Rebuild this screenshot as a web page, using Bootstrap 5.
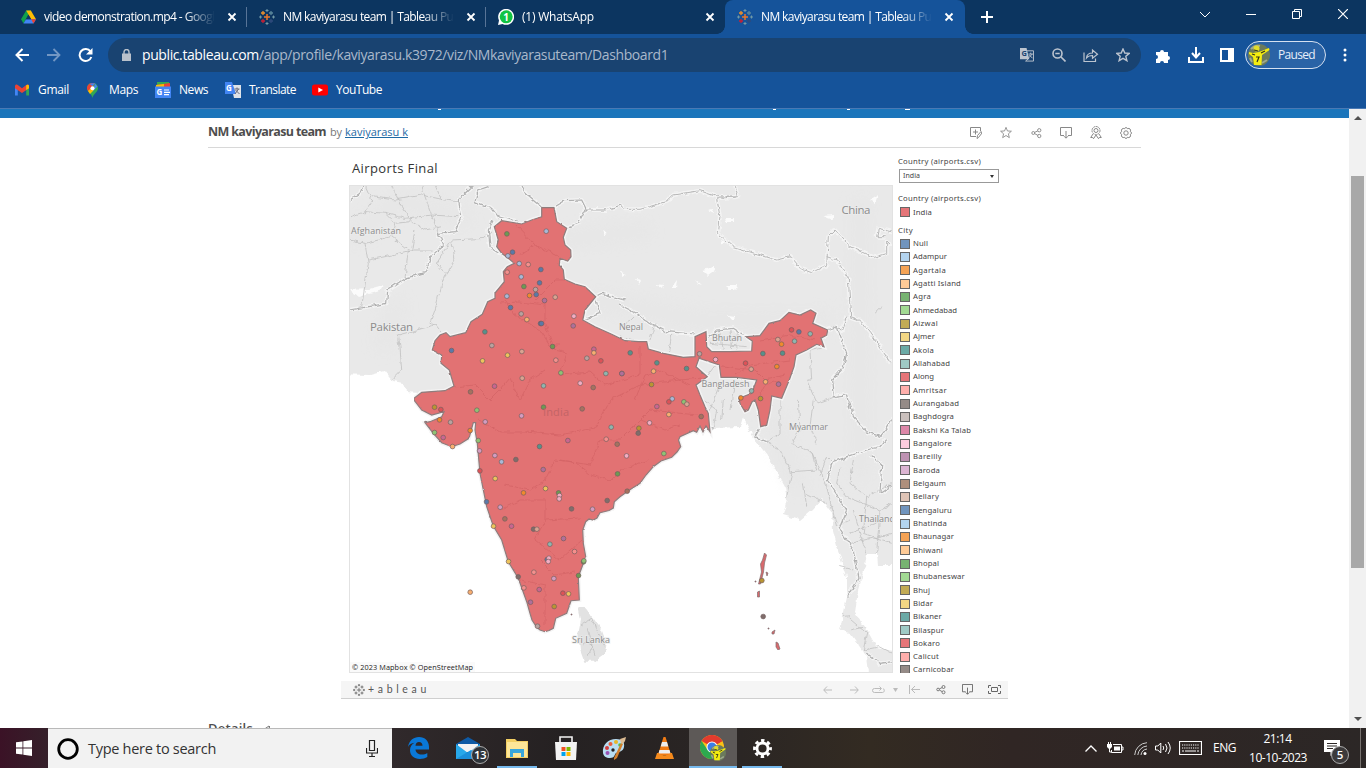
<!DOCTYPE html>
<html lang="en">
<head>
<meta charset="utf-8">
<meta name="viewport" content="width=device-width, initial-scale=1">
<title>NM kaviyarasu team | Tableau Public</title>
<link href="https://cdn.jsdelivr.net/npm/bootstrap@5.3.0/dist/css/bootstrap.min.css" rel="stylesheet">
<style>
html,body{height:100%;overflow:hidden}
body{font-family:"Open Sans","Noto Sans",sans-serif;font-size:12px;line-height:1.2;background:#fff}
svg{display:block;flex:none}
.screen{width:1366px;height:768px}
.w-cell{display:flex;align-items:center;justify-content:center;flex:none}
.tabstrip{height:34px;background:#0c3560;padding-left:8px;color:#fff;flex:none}
.ctab{width:239px;height:34px;padding:0 9px 0 13px;flex:none}
.ctab .ttl{width:171px;margin-left:7px;white-space:nowrap;overflow:hidden;-webkit-mask-image:linear-gradient(90deg,#000 82%,transparent 100%)}
.ctab .sep{width:1px;height:20px;background:#587497;margin-right:-9px;margin-left:8px}
.ctab.on{background:#15539a;border-radius:8px 8px 0 0;width:240px;position:relative}
.ctab.on::before,.ctab.on::after{content:"";position:absolute;bottom:0;width:8px;height:8px}
.ctab.on::before{left:-8px;background:radial-gradient(circle at 0 0,transparent 7.500px,#15539a 8px)}
.ctab.on::after{right:-8px;background:radial-gradient(circle at 100% 0,transparent 7.500px,#15539a 8px)}
.toolbar{height:42px;background:#15539a;flex:none}
.omni{width:1033px;height:34px;border-radius:17px;background:#194371;margin-left:8px;color:#a9b8cb;font-size:14px}
.omni b{color:#fff;font-weight:400}
.pill{width:81px;height:28px;border:1px solid #d5e0f0;border-radius:14px;background:#2a63a6;color:#e6eefa}
.bookbar{height:33px;background:#15539a;border-bottom:1px solid #4a79b4;color:#fff;padding-left:15px;flex:none;padding-bottom:4px}
.pagearea{height:619px;flex:none;overflow:hidden}
.strip{height:9px;background:#1b75bb}
.sheet{width:933px;margin-left:208px}
.vhead{height:30px;border-bottom:1px solid #d8d8d8;color:#4e4e4e}
.viz{width:667px;margin-left:133px;height:551px}
.vizbody{height:525px;overflow:hidden;padding-left:8px}
.maptitle{height:37px;font-size:13px;color:#333;padding:13px 0 0 3px}
.legend{font-family:"Noto Sans","Open Sans",sans-serif;font-size:7.700px;color:#444;width:110px;margin-left:5px;line-height:13.330px;white-space:nowrap}
.legend .sw{width:10px;height:10px;border:1px solid #666;margin:0 3px 0 2px;flex:none}
.legend .rowi{height:13.330px}
.pick{height:14px;width:100px;border:1px solid #999;padding:0 4px 0 3px;font-size:7px;line-height:12px;margin-left:1px}
.vbar{height:18px;margin-top:8px;background:#f5f5f5;border-bottom:1px solid #cfcfcf;color:#555}
.vscroll{width:17px;background:#f1f1f1}
.thumb{width:13px;height:392px;background:#a8a8a8;margin:50px 0 0 2px}
.taskbar{height:40px;color:#fff;flex:none;background:linear-gradient(90deg,#3b1226 0,#35202a 48px,#30292b 392px,#252122 560px,#2b2624 740px,#332b22 870px,#302624 1010px,#2c2726 1366px)}
.searchbox{width:344px;height:40px;background:#f2f2f2;border-top:1px solid #b9b9b9;color:#333;font-size:14.500px}
.tk{height:40px}
.tk i{position:absolute;left:4px;right:4px;bottom:0;height:2px;background:#76b9ed}
.num{position:absolute;border:1px solid #aaa;border-radius:50%;width:18px;height:18px;background:#2e3338;font-size:11.500px;line-height:16px;text-align:center;font-weight:600}
.fit{display:inline-block;white-space:nowrap}
.nb{stroke:#b0b0b0;stroke-width:1.200px;vector-effect:non-scaling-stroke}
.nl{stroke:#b8b8b8;stroke-width:1px;vector-effect:non-scaling-stroke}
.prov path{stroke:#c0c0c0;stroke-width:.8px;vector-effect:non-scaling-stroke}
.casing .nb,.casing .nl{stroke:#f4f4f4;stroke-width:4px}
</style>
</head>
<body>
<svg width="0" height="0" style="position:absolute">
<defs>
<symbol id="x" viewBox="0 0 12 12"><path d="M2.500 2.500l7 7m0-7l-7 7" stroke="#fff" stroke-width="1.800" fill="none"/></symbol>
<symbol id="tab" viewBox="0 0 16 16"><g fill="none" stroke-width="1.300"><path d="M8 5v6M5 8h6" stroke="#e8762b" stroke-width="1.500"/><path d="M4 2v4M2 4h4" stroke="#eb912c"/><path d="M12 2v4M10 4h4" stroke="#59879b"/><path d="M4 10v4M2 12h4" stroke="#c72035"/><path d="M12 10v4M10 12h4" stroke="#2f4b7c"/><path d="M8 0v3M6.500 1.500h3M8 13v3M6.500 14.500h3M1.500 6.500v3M0 8h3M14.500 6.500v3M13 8h3" stroke="#7199a6" stroke-width="1"/></g></symbol>
<symbol id="share" viewBox="0 0 12 12"><g fill="none" stroke="currentColor"><circle cx="2.500" cy="6" r="1.600"/><circle cx="9" cy="3" r="1.800"/><circle cx="9" cy="9.300" r="1.800"/><path d="M4 5.300l3.400-1.600M4 6.700l3.400 1.800"/></g></symbol>
<symbol id="dl" viewBox="0 0 12 12"><path d="M4 8.500H.5v-8h11v8H8M6 4v7M4 9.200l2 2 2-2" fill="none" stroke="currentColor"/></symbol>
<symbol id="face" viewBox="0 0 22 22"><circle cx="11" cy="11" r="11" fill="#6b7a5c"/><path d="M3 5q4-4 9-3M14 19l5-3M2 14l2 4" stroke="#9fa98e" stroke-width="2" fill="none"/><circle cx="8.500" cy="4.500" r="3" fill="#e2dc2a"/><path d="M1 8l4 1 6-1 10-4 .5 2-7.500 5-.5 10H6l-1-8-4-3z" fill="#f5ed10"/><path d="M6 6l4 1M4 10l3 1M8 13h3l-2 5M13 9l4-2" stroke="#30331b" stroke-width="1.200" fill="none"/></symbol>
</defs>
</svg>
<div class="screen d-flex flex-column overflow-hidden">
<div class="tabstrip d-flex">
  <div class="ctab d-flex align-items-center">
    <svg width="15" height="14" viewBox="0 0 16 14"><path d="M5.500 0h5L5.300 9 2.700 14 0 9.300z" fill="#11a04b"/><path d="M5.500 0h5L16 9.300h-5.200z" fill="#fbbc04"/><path d="M5.300 9.300H16L13.300 14H2.700z" fill="#4285f4"/><path d="M10.800 9.300H16L13.300 14z" fill="#ea4335"/><path d="M8 4.500L5.300 9.300h5.400z" fill="#0c3560"/></svg>
    <div class="ttl ms-2"><span class="fit" data-w="206">video demonstration.mp4 - Google Drive</span></div><svg class="ms-auto" width="12" height="12"><use href="#x"/></svg><div class="sep"></div>
  </div>
  <div class="ctab d-flex align-items-center" style="padding-left:12px">
    <svg width="16" height="16"><use href="#tab"/></svg><div class="ttl ms-2"><span class="fit" data-w="187">NM kaviyarasu team | Tableau Public</span></div><svg class="ms-auto" width="12" height="12"><use href="#x"/></svg><div class="sep"></div>
  </div>
  <div class="ctab d-flex align-items-center" style="padding-left:12px">
    <svg width="16" height="16" viewBox="0 0 16 16"><path d="M0 16l1-4.500A8 8 0 1 1 4.500 15z" fill="#fff"/><circle cx="8.200" cy="7.800" r="6.500" fill="#12c443"/><text x="8.200" y="11.500" font-size="10" font-weight="700" fill="#fff" text-anchor="middle">1</text></svg>
    <div class="ttl ms-2"><span class="fit" data-w="72">(1) WhatsApp</span></div><svg class="ms-auto" width="12" height="12"><use href="#x"/></svg>
  </div>
  <div class="ctab on d-flex align-items-center" style="padding-left:12px;padding-right:10px">
    <svg width="16" height="16"><use href="#tab"/></svg><div class="ttl ms-2"><span class="fit" data-w="187">NM kaviyarasu team | Tableau Public</span></div><svg class="ms-auto" width="12" height="12"><use href="#x"/></svg>
  </div>
  <div class="w-cell" style="width:44px"><svg width="12" height="12"><path d="M6 0v12M0 6h12" stroke="#fff" stroke-width="2"/></svg></div>
  <div class="d-flex ms-auto" style="padding-bottom:6px">
    <div class="w-cell" style="width:46px"><svg width="10" height="7"><path d="M0 1l5 5 5-5" stroke="#fff" fill="none"/></svg></div>
    <div class="w-cell" style="width:46px"><svg width="10" height="10"><path d="M0 5.500h10" stroke="#fff"/></svg></div>
    <div class="w-cell" style="width:46px"><svg width="10" height="10"><path d="M.5 2.500h7v7h-7zM2.500 2.500v-2h7v7h-2" stroke="#fff" fill="none"/></svg></div>
    <div class="w-cell" style="width:46px"><svg width="10" height="10"><path d="M0 0l10 10M10 0L0 10" stroke="#fff" stroke-width="1.200"/></svg></div>
  </div>
</div>
<div class="toolbar d-flex align-items-center">
  <div class="w-cell" style="width:44px"><svg width="14" height="14"><path d="M14 7H1.500M7.500 1L1.500 7l6 6" stroke="#fff" stroke-width="2" fill="none"/></svg></div>
  <div class="w-cell" style="width:20px"><svg width="14" height="14"><path d="M0 7h12.500M6.500 1l6 6-6 6" stroke="#7397c3" stroke-width="1.800" fill="none"/></svg></div>
  <div class="w-cell" style="width:36px;padding-left:7px"><svg width="15" height="15"><path d="M12.500 3.500A6 6 0 1 0 13.300 9" stroke="#fff" stroke-width="2" fill="none"/><path d="M14.500 0v6.500H8z" fill="#fff"/></svg></div>
  <div class="omni d-flex align-items-center">
    <div class="w-cell" style="width:34px"><svg width="9" height="12" style="margin-left:2px"><path d="M0 4.500h9V12H0z" fill="#b9c1cb"/><path d="M2 5V3a2.500 2.500 0 0 1 5 0v2" stroke="#b9c1cb" stroke-width="1.400" fill="none"/></svg></div>
    <span class="fit" data-w="526">​<b>public.tableau.com</b>/app/profile/kaviyarasu.k3972/viz/NMkaviyarasuteam/Dashboard1</span>
    <div class="d-flex ms-auto" style="padding-right:2px">
      <div class="w-cell" style="width:32px"><svg width="14" height="14" viewBox="0 0 15 15"><path d="M0 0h7l3 12H0z" fill="#bcc4cf"/><path d="M7.500 3h7v11H6l3-2.500" fill="none" stroke="#bcc4cf"/><text x="1.500" y="9" font-size="8" font-weight="700" fill="#194371">G</text><path d="M9 6.500h5M11.500 5v1.500M9.500 10.500l3.500-4M10 7.500l3.500 3.500" stroke="#bcc4cf" fill="none"/></svg></div>
      <div class="w-cell" style="width:32px"><svg width="14" height="14"><g fill="none" stroke="#bcc4cf" stroke-width="1.600"><circle cx="5.500" cy="5.500" r="4.500"/><path d="M9 9l4.500 4.500M3.300 5.500h4.400"/></g></svg></div>
      <div class="w-cell" style="width:32px"><svg width="16" height="14"><path d="M1 4.500v9h11.500v-3M3.500 10c.3-3.500 2.500-5 6-5V2l5 4.300-5 4V7.500C7 7.500 5 8 3.500 10z" fill="none" stroke="#bcc4cf" stroke-width="1.200"/></svg></div>
      <div class="w-cell" style="width:32px"><svg width="14" height="14" viewBox="0 0 14 14"><path d="M7 1l1.800 4 4.400.4-3.400 2.900 1.100 4.400L7 10.400l-3.900 2.300 1.100-4.400L.8 5.400 5.200 5z" fill="none" stroke="#bcc4cf" stroke-width="1.400"/></svg></div>
    </div>
  </div>
  <div class="w-cell" style="width:34px;margin-left:5px"><svg width="15" height="15"><path d="M0 4h4a2 2 0 1 1 4 0h4v4a2 2 0 1 1 0 4v3H8a2 2 0 1 0-4 0H0v-4a2 2 0 1 0 0-4z" fill="#fff"/></svg></div>
  <div class="w-cell" style="width:31px"><svg width="16" height="16"><path d="M8 0v10M4 6l4 4.500L12 6M1 10v5h14v-5" stroke="#fff" stroke-width="2" fill="none"/></svg></div>
  <div class="w-cell" style="width:32px"><svg width="14" height="14"><path d="M0 0h14v14H0zM2 2v10h6V2z" fill="#fff" fill-rule="evenodd"/></svg></div>
  <div class="pill d-flex align-items-center" style="margin-left:2px;padding-left:2px"><svg width="22" height="22"><use href="#face"/></svg><span class="fit" data-w="37" style="margin-left:8px">Paused</span></div>
  <div class="w-cell" style="width:37px"><svg width="4" height="14" fill="#fff"><circle cx="2" cy="2" r="1.500"/><circle cx="2" cy="7" r="1.500"/><circle cx="2" cy="12" r="1.500"/></svg></div>
</div>
<div class="bookbar d-flex align-items-center">
  <svg width="14" height="12" viewBox="0 0 15 12"><path d="M0 12V2l3 2v8z" fill="#4285f4"/><path d="M12 12V4l3-2v10z" fill="#34a853"/><path d="M0 2C0 0 2-.5 3.300.8L7.500 4 11.700.8C13-.5 15 0 15 2v2L7.500 9.200 0 4z" fill="#ea4335"/><path d="M12 1v5l3-2V2c0-2-2-2-3-1z" fill="#fbbc04"/></svg>
  <span class="fit pt-1" data-w="31" style="margin-left:9px;margin-top:-3px">Gmail</span>
  <svg width="11" height="15" viewBox="0 0 11 15" style="margin-left:18px"><path d="M5.500 15C5 11 0 9 0 5.200A5.500 5.500 0 0 1 11 5.200C11 9 6 11 5.500 15z" fill="#34a853"/><path d="M0 5.200C0 2 2.500 0 5.500 0L8 .6 1.500 8.500C.6 7.500 0 6.500 0 5.200z" fill="#ea4335"/><path d="M8 .6C6 0 4 0 2.500 1l3 2z" fill="#4285f4"/><path d="M1 8l4-4 2 3-4 4z" fill="#fbbc04"/><path d="M8 .6l2.500 2.800L6 8z" fill="#4285f4"/><circle cx="5.500" cy="5.300" r="2" fill="#fff"/></svg>
  <span class="fit pt-1" data-w="29" style="margin-left:11px;margin-top:-3px">Maps</span>
  <svg width="16" height="16" viewBox="0 0 16 16" style="margin-left:17px"><path d="M2 0h12v6H2z" fill="#34a853"/><path d="M1 3l14-2v6H1z" fill="#ea4335"/><path d="M1 3l8-1v5H1z" fill="#fbbc04"/><path d="M0 4.500h16V16H0z" fill="#4285f4"/><text x="1.500" y="13" font-size="8" font-weight="700" fill="#fff">G</text><path d="M9 8h5M9 10.300h6M9 12.600h5" stroke="#fff" stroke-width="1.200"/></svg>
  <span class="fit pt-1" data-w="29" style="margin-left:8px;margin-top:-3px">News</span>
  <svg width="16" height="16" viewBox="0 0 16 16" style="margin-left:17px"><path d="M6 3h10v13H9z" fill="#dfe3e9"/><path d="M0 0h7l4 12H0z" fill="#4285f4"/><text x="1" y="9" font-size="8" font-weight="700" fill="#fff">G</text><path d="M9.500 7h5M12 5.500V7M10 12l3.500-5M10.500 8l4 4" stroke="#667" fill="none"/></svg>
  <span class="fit pt-1" data-w="47" style="margin-left:8px;margin-top:-3px">Translate</span>
  <svg width="16" height="12" style="margin-left:16px"><rect y=".5" width="16" height="11" rx="2.500" fill="#f00"/><path d="M6.300 3.500L11 6 6.300 8.500z" fill="#fff"/></svg>
  <span class="fit pt-1" data-w="46" style="margin-left:8px;margin-top:-3px">YouTube</span>
</div>
<div class="pagearea d-flex">
 <div class="flex-grow-1">
  <div class="strip"><svg width="1349" height="2" fill="#fff"><path d="M438 0h3v1h-3zM773 0h3v1h-3zM847 0h3v1h-3zM905 0h5v1h-5z"/></svg></div>
  <div class="sheet">
   <div class="vhead d-flex align-items-center">
     <b class="fit" data-w="118" style="font-size:12.500px;margin-top:-2px">NM kaviyarasu team</b><span class="fit" data-w="12" style="font-size:11px;margin-left:4px;margin-top:-1px;color:#777">by</span><u class="fit" data-w="63" style="font-size:11px;margin-left:3px;margin-top:-1px;color:#1e6aa5">kaviyarasu k</u>
     <div class="d-flex ms-auto" style="color:#888">
      <div class="w-cell" style="width:30px"><svg width="12" height="12" fill="none" stroke="currentColor"><path d="M6 9.500H.5v-9h10V4M5.500 2.500v5M3 5h5M7 11.500l.5-3L11 4.500l1 1.500-3.500 4.500z"/></svg></div>
      <div class="w-cell" style="width:30px"><svg width="12" height="13" viewBox="0 0 14 14"><path d="M7 1l1.700 4.200 4.600.3-3.500 3 1.100 4.500L7 10.500 3.100 13l1.100-4.500-3.500-3 4.600-.3z" fill="none" stroke="currentColor"/></svg></div>
      <div class="w-cell" style="width:30px"><svg width="11" height="12"><use href="#share"/></svg></div>
      <div class="w-cell" style="width:30px"><svg width="12" height="12"><use href="#dl"/></svg></div>
      <div class="w-cell" style="width:30px"><svg width="12" height="13" fill="none" stroke="currentColor"><circle cx="6" cy="4.500" r="4" stroke-dasharray="2 .6"/><circle cx="6" cy="4.500" r="2"/><path d="M3 8L.7 11.500l2 0 .8 1.200L6 9l2.500 3.700.8-1.200h2L9 8"/></svg></div>
      <div class="w-cell" style="width:30px"><svg width="12" height="12" fill="none" stroke="currentColor" viewBox="0 0 12 12"><path d="M6 .5q1 0 1.300 1.200Q9.300.9 10 2q1 1 .3 2.500 1.200.5 1.200 1.500t-1.200 1.500Q11 9 10 10q-1 1-2.700.3Q7 11.500 6 11.500t-1.300-1.200Q3 11 2 10T1.700 7.500Q.5 7 .5 6t1.200-1.500Q1 3 2 2q1-1 2.700-.3Q5 .5 6 .5z"/><circle cx="6" cy="6" r="2.200"/></svg></div>
     </div>
   </div>
   <div class="viz">
    <div class="vizbody d-flex">
     <div>
      <div class="maptitle"><span class="fit" data-w="86">Airports Final</span></div>
      <svg width="544" height="488" viewBox="349 185 544 488" id="map">
       <defs><filter id="rough" x="0" y="0" width="1" height="1" color-interpolation-filters="sRGB"><feTurbulence type="fractalNoise" baseFrequency=".17" numOctaves="2" seed="4" result="n"/><feDisplacementMap in="SourceGraphic" in2="n" scale="5" xChannelSelector="R" yChannelSelector="G"/></filter>
       <filter id="fine" x="0" y="0" width="1" height="1" color-interpolation-filters="sRGB"><feTurbulence type="fractalNoise" baseFrequency=".25" numOctaves="1" seed="7" result="n"/><feDisplacementMap in="SourceGraphic" in2="n" scale="2.200" xChannelSelector="R" yChannelSelector="G"/></filter>
       <filter id="soft"><feGaussianBlur stdDeviation="9"/></filter>
       <path id="ind" d="M541.700 207.700L554 207.700L556.700 221.700L566.700 228.300L563.300 237.300L565 245L570.700 250L571 256.700L567.700 261L560 258.300L559.300 265L563.300 270L564.300 279.300L575 284L585 286.700L595.700 296.700L585 310L582.700 320L595 326.700L611.700 334.300L625 340.700L638.300 341.700L646.700 341.700L648.300 349L663.300 353.300L683.300 357.300L695 356.700V336.700L706 331.700L706.700 346.700L711.700 351.700L730 351.700L751.700 351L752.300 341L746 336.700L760 335.700L769 323.300L780 320.700L789 312.300L800 315L810.700 310L816 313.300L812.700 323.300L827.700 330L826.700 335L821 338.300L824 346.700L816.700 344.300L806.700 350L796 355L794 366.700L789.300 380L781.700 398.300L771.700 396L770 410L766.700 425L760.700 426.700L758.300 410L755 400L752 402L748.300 410L745 411.700L740 403.300L739 398.300L751.700 393.300L756.700 380L736.700 377.300L721 377.300L719.300 365L699 358.300L696 366.700L707.300 376.700L696 385L700 395L705 406.700L708.300 413.300L710 431.700L706 426L703 432L700 426L696.700 432.300L693.300 430.700L680 436.700L678.500 440L680.700 446.700L677 452L671.700 457.300L661 461L653.300 466.700L646 475L640 483.300L631 489L620 496.700L614.300 501.700L613.300 508L609 510.500L600 512.700L597 518L593.300 520L589 519L585.700 521.700L582.700 530L583.300 543.300L585.700 556.700L582 567L578.300 576.700L579.300 600L571 600.700L566.700 613.300L555.700 618.300L553.300 628.300L549 630.500L545 631.700L540 630L536.700 627.300L532 620L530 613.300L526.700 601.700L518.300 578.300L508.300 561.700L501.700 540L493.300 526L486.700 506.700L480 473.300L477.300 443.300L475 430L475.700 422.700L473.300 422.700L469 438.300L460 444L451.700 446.700L441.700 442.700L433.300 433.300L425 422.700L430 421.700L441.700 416.700L444 411.700L431.700 415L421.700 410L414 400V398.300L421.700 392.300L445 390.700L454 386L449.300 370L441 363.300L441.700 355L432.300 350L435 340.700L440 335L446 332.700L450 336.700L465.700 332.700L471 321.700L482.300 314.300L487.700 301.700L495 298.300L495 293L504.300 281.700L503.300 271.700L507.300 266.700L514.300 263.300L508.300 258.300L501.700 253.300L496.700 246.700L498.300 240L494.300 226.700L501.700 220.700L521.700 224L531.700 220L541.700 216.700Z"/>
       </defs>
       <g filter="url(#rough)">
        <rect x="340" y="180" width="560" height="500" fill="#fff"/>
        <path fill="#e9e9e9" d="M340 180H900V565L878 565L877 554L867 554L865 567L858 590L855 613L867 630L877 648L900 652V680H870L867 657L850 633L840 630L847 597V577L838 550L833 530L832 513L822 499L812 510L800 520L783 515L787 500L785 487L777 472L767 455L755 440L748 427L743 417L740 427L713 428L705 425L480 430L440 395L407 392L403 383L393 381L385 371L370 375L340 374Z"/>
        <g fill="none" stroke="#dedede" stroke-width="12" filter="url(#soft)" opacity=".35"><path d="M349 240L400 200L470 220M400 300L380 350M590 300L700 320L830 320M860 200V480M770 410L800 490M560 240L650 230"/></g>
        <g transform="translate(345 400) scale(.33333)"><path d="M700 622L722 625L745 655L770 690L785 730L780 760L745 785L718 785L705 750L700 700L708 660Z" fill="#e2e2e2"/></g>
        <g fill="#fbfbfb">
         <path d="M349 290l20-1 14-4-3 6-22 6zM702 270l12-3 1 4-7 5zM726 285l11 0-2 6-7 0zM656 284l8 1-1 4zM671 288l6-8-1 8zM695 279l7 6-3-1zM823 216l10-1 0 5zM725 218h8v4h-7zM708 210l5-1 1 4zM720 240l6 2-4 3zM870 200l8-5-3 8zM728 315l8 1-4 4zM602 231l6 3-4 1zM621 272l6 2-5 3zM636 280l5 1-2 3z"/>
        </g>
        <!-- national borders, white casing first -->
        <g id="natl" fill="none" stroke-linejoin="round">
         <g transform="translate(345 150) scale(.33333)">
          <path class="nb" d="M12 480L60 472L125 460L128 420L180 385L240 368L258 320L295 285L280 250L330 245L350 200L340 150L385 105"/>
          <path class="nb" d="M15 150L45 130L55 105"/>
          <path class="nb" d="M390 155L400 120L430 110M390 155L440 175L460 200L520 215M530 105L545 135L590 172M627 172L660 152L710 150L725 180M665 232L700 220L720 180L780 180L830 165"/>
          <path class="nb" d="M445 210L430 240L435 290L470 312M750 440L770 430L840 450M750 440L765 490L715 510"/>
         </g>
         <g transform="translate(620 150) scale(.33333)">
          <path class="nb" d="M0 465L50 490L90 520L140 545L225 552M262 570L290 540L340 535L380 560M262 590L275 605"/>
          <path class="nb" d="M620 540L650 530L665 570L680 610L670 650L635 690L640 740L680 735L690 780"/>
          <path class="nl" d="M0 165L15 178L60 178L140 155L160 135L240 122L290 140L350 142M345 105L355 140L290 145L300 200L295 250L340 290L420 315L470 330L510 320L540 355L575 368L620 345L625 260L645 240L690 290L760 322L800 310L800 275L815 290M620 320L650 330L685 385L692 500L720 510L760 560L812 640M680 500L665 540L635 530M815 245L775 235L770 260L800 260"/>
         </g>
         <g transform="translate(620 400) scale(.33333)">
          <path class="nb" d="M688 0L700 50L740 95L780 110L800 85L820 50M800 115L780 140L740 150L640 185L622 240L680 330L658 385L700 450L717 535L683 590M750 165L785 195L780 280L818 255M422 80L405 110L440 125M740 760L780 790L818 785"/>
         </g>
         <path class="nb" d="M694 430L698 425L713 428"/>
        </g>
        <!-- state and province lines -->
        <g class="prov" fill="none">
         <g transform="translate(345 150) scale(.33333)">
          <path d="M15 200L60 185L120 190L180 205L260 195L340 200M60 105L80 150L60 190M80 140L150 150L230 135L300 150L340 155M120 190L150 220L140 260L60 280L15 270M150 220L200 215L240 240L290 230M140 105L160 150L200 215M230 105L240 140L260 195L280 250M60 280L70 340L50 470M140 260L190 300L180 385M190 300L260 300M210 240L200 300L120 320L70 330M270 105L290 150M140 690L170 660L165 590L160 555L270 525L290 550M270 525L255 520L270 480L300 370L275 340L320 270L420 265L440 240M320 270L330 330L300 380"/>
         </g>
         <g transform="translate(620 150) scale(.33333)">
          <path d="M0 530L30 510L45 495M90 570L105 520M145 610L155 555M0 560L50 575M270 580L380 590M300 545L310 600M330 540L335 600M355 545L350 600M290 640L260 680M300 700L270 780M345 690L330 780M610 590L570 600L575 690L560 690L590 760L660 735M765 490L785 470"/>
         </g>
         <g transform="translate(620 400) scale(.33333)">
          <path d="M480 0L480 100L440 125M480 150L515 220L500 290M515 215L590 210L580 160L515 130L540 90L535 0M580 160L620 260L650 380L690 360M550 250L560 320M580 0L570 80L590 130M600 230L620 170L640 190M560 280L620 310M440 125L480 150M660 200L650 250L680 290L780 330L818 310M700 180L690 250L740 290L730 400L818 430M690 400L740 380L790 360M740 290L818 250M700 330L720 400L740 460M780 330L770 460M690 430L818 400M660 500L700 510M670 640L740 700L730 750L780 740L818 760M690 690L740 680M250 0L290 30L280 85M310 0L305 60"/>
         </g>
         <path d="M581 625L592 618L596 630L603 640M583 645L590 640L595 655M587 628L592 645L588 655M596 640L605 645"/>
        </g>
       </g>
       <g filter="url(#fine)">
        <use href="#ind" fill="none" stroke="#f4f4f4" stroke-width="4"/>
        <use href="#ind" fill="#e27273" stroke="#8f7c7c" stroke-width="1.200"/>
        <g fill="#d9696c" stroke="#806f70" stroke-width=".7"><path d="M764.500 553l2 2-2 8-1 9-3 12-2 0 3-12-1-8 2-4zM757.500 592l2-1v6l-2 0zM772 632l3-2-1 4-2 0zM776 642l2 1 2 6-2 1-2-3zM766 572l2 1-1 3zM755 581h1v1h-1zM768 628h1v1h-1zM571 614h1v1h-1z"/></g>
       </g>
       <g filter="url(#rough)" fill="none" stroke="#cf6062" stroke-width=".8" opacity=".75">
         <path d="M515 224L535 245L550 252L562 258M505 300L515 315L540 330L550 345L560 345M520 255L535 245M535 300L545 290L555 280L565 280M500 303L520 302L545 305L545 325L555 350L567 353L560 375L590 372L605 385L640 375L640 345M454 387L475 385L490 400L500 390L510 378L520 400L530 380L545 370M478 420L500 432L525 432L560 435L595 428L610 400L640 385L680 380L702 378M560 460L590 465L600 440L620 440L640 420L650 410L697 415M505 485L530 490L545 480L555 460L575 462L590 475L610 480L620 470L648 460M500 510L520 500L545 500L545 520L580 518M545 520L535 540L560 560L582 540M520 580L545 585L545 625M540 560L555 575L575 572M635 400L645 375L660 370L690 385M640 420L665 430L680 425M735 375L750 365L790 360M722 366L755 370L765 380L785 375M760 340L790 335L815 340M760 395L765 385L780 380"/>
       </g>
       <g id="dots" stroke="#735e5e" stroke-opacity=".75" stroke-width=".9"></g>
       <g font-family="Open Sans,Noto Sans,sans-serif" fill="#8c8c8c" text-anchor="middle" stroke="#ededed" stroke-width="2" paint-order="stroke" stroke-opacity=".65">
        <text x="376" y="234" font-size="9" textLength="50">Afghanistan</text><text x="391.500" y="330.500" font-size="11.500" textLength="43">Pakistan</text><text x="631" y="330" font-size="9" textLength="24">Nepal</text><text x="727" y="341" font-size="9" textLength="30">Bhutan</text><text x="725.500" y="387" font-size="9" textLength="48">Bangladesh</text><text x="856" y="214" font-size="11.500" textLength="29">China</text><text x="808.500" y="430" font-size="9" textLength="39">Myanmar</text><text x="859" y="522" font-size="9" text-anchor="start">Thailand</text><text x="591" y="643" font-size="9" textLength="38">Sri Lanka</text>
        <text x="556" y="416" font-size="11" fill="#c26466" stroke="none" textLength="26">India</text>
       </g>
       <rect x="349" y="662" width="126" height="10" fill="#fafafa"/>
       <text x="352" y="670" font-size="7.300" font-family="Open Sans,sans-serif" fill="#222" textLength="121">© 2023 Mapbox  © OpenStreetMap</text>
       <rect x="349.500" y="185.500" width="543" height="487" fill="none" stroke="#e2e2e2"/>
      </svg>
     </div>
     <div class="legend">
      <div style="height:21px;padding-top:7px"><span class="fit" data-w="83">Country (airports.csv)</span></div>
      <div class="pick d-flex align-items-center"><span class="fit" data-w="17">India</span><svg class="ms-auto" width="4" height="3"><path d="M0 0h4L2 3z" fill="#333"/></svg></div>
      <div style="margin-top:9px"><span class="fit" data-w="83">Country (airports.csv)</span></div>
      <div class="rowi d-flex align-items-center" style="padding-top:1px"><span class="sw" style="background:#e57578"></span><span class="fit" data-w="19">India</span></div>
      <div style="margin-top:5px"><span class="fit" data-w="15">City</span></div>
      <div id="cities"></div>
     </div>
    </div>
    <div class="vbar d-flex align-items-center">
     <svg width="12" height="12" viewBox="0 0 16 16" style="margin-left:12px" stroke="#555" fill="none"><path d="M8 5v6M5 8h6M4 2v4M2 4h4M12 2v4M10 4h4M4 10v4M2 12h4M12 10v4M10 12h4M8 0v3M6.500 1.500h3M8 13v3M6.500 14.500h3M1.500 6.500v3M0 8h3M14.500 6.500v3M13 8h3"/></svg>
     <span class="fit" data-w="62" style="font-size:10.500px;margin-left:3px;margin-top:-1px;font-family:Lato,sans-serif">+ableau</span>
     <div class="d-flex ms-auto" style="color:#666">
      <div class="w-cell" style="width:27px"><svg width="9" height="8"><path d="M9 4H1M4 .5L.7 4 4 7.500" stroke="#bbb" fill="none"/></svg></div>
      <div class="w-cell" style="width:26px"><svg width="9" height="8"><path d="M0 4h8M5 .5L8.300 4 5 7.500" stroke="#bbb" fill="none"/></svg></div>
      <div class="w-cell" style="width:23px"><svg width="13" height="8"><path d="M9 6.500H2.500a2 2 0 0 1 0-4H9M7.500.5l2 2-2 2M11 2.500c2 1 1.500 4-.5 4H8" stroke="#bbb" fill="none"/></svg></div>
      <div class="w-cell" style="width:11px"><svg width="5" height="4"><path d="M0 0h5L2.500 4z" fill="#bbb"/></svg></div>
      <div class="w-cell" style="width:26px"><svg width="11" height="9"><path d="M.5 0v9M11 4.500H2.500M6 1L2.500 4.500 6 8" stroke="#bbb" fill="none"/></svg></div>
      <div class="w-cell" style="width:27px"><svg width="10" height="11"><use href="#share"/></svg></div>
      <div class="w-cell" style="width:26px"><svg width="11" height="11"><use href="#dl"/></svg></div>
      <div class="w-cell" style="width:28px"><svg width="13" height="9"><path d="M3.500 2.500h6v4h-6zM.5 3V.5H3M10 .5h2.500V3M.5 6v2.500H3M10 8.500h2.500V6" stroke="currentColor" fill="none"/></svg></div>
     </div>
    </div>
   </div>
   <div class="d-flex align-items-center" style="padding-top:22px"><b class="fit" data-w="45" style="font-size:13px;color:#4e4e4e;font-weight:600">Details</b><svg width="12" height="10" style="margin-left:8px"><path d="M1 9l1-3 6-4 1 1-6 5z" fill="none" stroke="#777"/></svg></div>
  </div>
 </div>
 <div class="vscroll d-flex flex-column"><svg width="17" height="17"><path d="M5 11h8L9 7z" fill="#505050"/></svg><div class="thumb"></div><svg class="mt-auto" width="17" height="17"><path d="M5 6h8l-4 4z" fill="#505050"/></svg></div>
</div>
<div class="taskbar d-flex align-items-center">
  <div class="w-cell" style="width:48px"><svg width="16" height="16" fill="#fff"><path d="M0 2.300L6.500 1.400V7.500H0zM7.300 1.300L16 0v7.500H7.300zM0 8.400h6.500v6.200L0 13.700zM7.300 8.400H16V16l-8.700-1.300z"/></svg></div>
  <div class="searchbox d-flex align-items-center"><svg width="22" height="22" style="margin-left:9px"><circle cx="11" cy="11" r="9.300" fill="none" stroke="#000" stroke-width="2.800"/></svg><span class="fit" data-w="128" style="margin-left:9px">Type here to search</span><svg class="ms-auto" width="12" height="17" style="margin-right:14px"><path d="M3.500.5h5v10h-5zM.5 8v5h11V8M6 13v3.500M3 16.500h6" fill="none" stroke="#222" stroke-width="1.200"/></svg></div>
  <div class="w-cell tk" style="width:47px;margin-left:3px"><svg width="21" height="22" viewBox="0 0 21 22"><path d="M0 10C1 3.500 5.500 0 11 0c6 0 10 4 10 10v2.500H7.500c.3 3.500 3 5 6 5 2.500 0 4.300-.7 5.800-1.600V20c-2 1.300-4.500 2-7.500 2C6 22 2 18.500 2 13.300c0-3.500 1.800-6 4.500-7.500C3.500 6 1 7.500 0 10zm7.500-1.200h7C14.500 6.500 13.200 5 11 5S7.700 6.500 7.500 8.800z" fill="#0a78d7"/></svg></div>
  <div class="w-cell tk position-relative" style="width:50px;margin-left:1px"><svg width="24" height="22" style="margin-left:0"><path d="M0 7L12 0l12 7v6H0z" fill="#0e5aa5"/><path d="M2 7h20v8H2z" fill="#f3f3f3"/><path d="M0 7l12 9 12-9v15H0z" fill="#28a8ea"/><path d="M0 22l15-9 9 9z" fill="#1b8fdb"/></svg><span class="num" style="left:28px;top:18px"><span class="fit" data-w="12">13</span></span></div>
  <div class="w-cell tk position-relative" style="width:48px"><svg width="22" height="19"><path d="M0 0h9l2 2h11v17H0z" fill="#f3cf63"/><path d="M1 3h20v15H1z" fill="#fde698"/><path d="M4 10h14v8h-3v-4H7v4H4z" fill="#39a7dc"/></svg><i></i></div>
  <div class="w-cell tk" style="width:49px"><svg width="24" height="24"><path d="M6 6V1h12v5" fill="none" stroke="#f3f3f3" stroke-width="1.600"/><path d="M1 6h22l-1 18H2z" fill="#f3f3f3"/><path d="M7.500 11h4v4h-4z" fill="#f25022"/><path d="M12.500 11h4v4h-4z" fill="#7fba00"/><path d="M7.500 16h4v4h-4z" fill="#00a4ef"/><path d="M12.500 16h4v4h-4z" fill="#ffb900"/></svg></div>
  <div class="w-cell tk" style="width:49px"><svg width="25" height="24"><path d="M1 17C0 9 6 3 14 3c6 0 9 3 8 8-1 5-6 5-8 6-2 2-1 5-6 5-4 0-6.500-2-7-5z" fill="#b9ddf2"/><circle cx="5" cy="12" r="2" fill="#d43c3c"/><circle cx="8.500" cy="8" r="2" fill="#e85d3c"/><circle cx="14" cy="6" r="2" fill="#e9b829"/><circle cx="5.500" cy="17" r="2" fill="#9a52b4"/><circle cx="18" cy="9" r="1.800" fill="#59b84c"/><circle cx="11" cy="14" r="1.700" fill="#252122"/><path d="M12 22L19 7l2 1-6 14-3 2z" fill="#d2802e"/><path d="M19 7l-1-4 6-2-1 4-2 3z" fill="#dcbb93"/></svg></div>
  <div class="w-cell tk" style="width:50px"><svg width="21" height="23"><path d="M9.500 0h2l5.500 18H4z" fill="#f27c14"/><path d="M8 5h5l1.300 4.500H6.700zM5.500 13h10l1 3.500h-12z" fill="#eee"/><path d="M3 16h2c0 3 11 3 11 0h2l2 6H1z" fill="#f58a1c"/></svg></div>
  <div class="w-cell tk position-relative" style="width:48px;background:#5d5957"><svg width="26" height="27" viewBox="0 0 26 27"><circle cx="12" cy="12" r="12" fill="#fbc116"/><path d="M1.600 6A12 12 0 0 1 22.400 6L12 12z" fill="#e33b2e"/><path d="M22.400 6H12L7 15z" fill="#e33b2e"/><path d="M1.600 6A12 12 0 0 0 12 24l5-9-10-1z" fill="#2da94f"/><circle cx="12" cy="12" r="5.500" fill="#fff"/><circle cx="12" cy="12" r="4.500" fill="#3d7de8"/><svg x="10" y="10" width="16" height="16"><use href="#face"/></svg></svg><i style="left:0;right:0"></i></div>
  <div class="w-cell tk position-relative" style="width:48px;margin-left:1px"><svg width="19" height="19" viewBox="0 0 19 19"><g fill="none" stroke="#fff"><circle cx="9.500" cy="9.500" r="5.500" stroke-width="2.800"/><circle cx="9.500" cy="9.500" r="8" stroke-width="2.800" stroke-dasharray="3.400 2.883" stroke-dashoffset="1.700"/></g></svg><i></i></div>
  <div class="d-flex align-items-center ms-auto">
    <svg width="12" height="7"><path d="M.5 6.500L6 1l5.500 5.500" stroke="#fff" fill="none" stroke-width="1.300"/></svg>
    <svg width="17" height="12" style="margin-left:10px"><path d="M6 2.500h8.500v8H4.500V8M14.500 5H16v3h-1.500" stroke="#fff" fill="none"/><path d="M7 4.500h6v4H7zM0 2h5v3L3 7H2L0 5z" fill="#fff"/><path d="M1.500 0v2M3.500 0v2M2.500 6v4h2" stroke="#fff" fill="none"/></svg>
    <svg width="13" height="13" style="margin-left:10px"><path d="M.7 13A13 13 0 0 1 13 .7M3.800 13A10 10 0 0 1 13 4M7 13a7 7 0 0 1 6-6" stroke="#ccc" fill="none"/><circle cx="11" cy="11.500" r="1.500" fill="#fff"/></svg>
    <svg width="17" height="14" style="margin-left:8px"><path d="M.5 5v4h2.300l3 3V2l-3 3zM8 5q1.500 2 0 4M10.500 3q3 4 0 8M13 1q4.500 6 0 12" stroke="#fff" fill="none"/></svg>
    <svg width="23" height="14" style="margin-left:7px"><path d="M.5.500h22v13H.500z" fill="none" stroke="#fff" stroke-width="1.200"/><path d="M3 4h17M3 7h17" stroke="#fff" stroke-dasharray="1.200 1"/><path d="M3 10h2M6 10h11M18 10h2" stroke="#fff"/></svg>
    <span class="fit" data-w="23" style="margin-left:11px">ENG</span>
    <div class="text-center" style="width:57px;margin-left:13px;line-height:19px"><span class="fit" data-w="28">21:14</span><br><span class="fit" data-w="58">10-10-2023</span></div>
    <div class="position-relative" style="width:42px;height:40px;margin-left:18px;border-right:1px solid transparent"><svg width="16" height="17" style="margin-top:12px"><path d="M0 0h16v12h-6l-3.500 4v-4H0z" fill="#fff"/><path d="M3 3.500h10M3 6h10M3 8.500h6" stroke="#2d2827"/></svg><span class="num" style="left:7px;top:18px;background:#3c3a3b">5</span><span class="position-absolute" style="left:36px;top:0;width:1px;height:40px;background:#77726f"></span></div>
  </div>
</div>
</div>
<script src="https://cdn.jsdelivr.net/npm/bootstrap@5.3.0/dist/js/bootstrap.bundle.min.js"></script>
<script>
const NS='http://www.w3.org/2000/svg';
const pal=['#7094bd','#b3d4ef','#f5a355','#ffcb97','#77b371','#a2da93','#c2ab55','#f3d784','#6caaa6','#9fcac5','#e57578','#ffafac','#958b87','#cac0bd','#dd88a9','#fcccdd','#be92b2','#dcb5d3','#ae8f7c','#dfc4b6'];
const names='Null,Adampur,Agartala,Agatti Island,Agra,Ahmedabad,Aizwal,Ajmer,Akola,Allahabad,Along,Amritsar,Aurangabad,Baghdogra,Bakshi Ka Talab,Bangalore,Bareilly,Baroda,Belgaum,Bellary,Bengaluru,Bhatinda,Bhaunagar,Bhiwani,Bhopal,Bhubaneswar,Bhuj,Bidar,Bikaner,Bilaspur,Bokaro,Calicut,Carnicobar'.split(',');
const widths=[15,34,33,48,18,44,25,22,21,37,21,34,46,41,58,39,29,27,33,26,39,34,41,30,26,52,17,20,29,31,27,26,41];
document.getElementById('cities').innerHTML=names.map((n,i)=>`<div class="rowi d-flex align-items-center"><span class="sw" style="background:${pal[i%20]}"></span><span class="fit" data-w="${widths[i]}">${n}</span></div>`).join('');
/* airports: x, y, palette key, on four survey tiles */
const C={b:'#5a79a8',B:'#a9b8d6',o:'#f08a2c',O:'#f7ae70',g:'#6d9a52',G:'#8fc274',l:'#b99532',y:'#ecc35c',t:'#57918b',T:'#8fb5ae',r:'#dd5257',p:'#f58f8c',k:'#7f6d6b',K:'#b9a29f',m:'#c96690',M:'#f2acc2',u:'#b0709a',U:'#d39cc0',n:'#a5725f',N:'#d9a391'};
const tiles=[
[345,150,'485 251 g,603 243 B,502 306 b,488 317 B,522 340 B,549 343 p,486 366 p,587 358 b,528 380 B,583 398 b,536 409 g,571 418 K,553 436 o,573 433 b,598 451 u,630 441 N,485 438 B,496 472 b,528 491 K,545 508 O,586 520 b,589 520 b,686 498 M,684 527 u,419 545 t,440 586 K,319 601 b,487 615 y,530 604 N,412 632 y,622 589 g,632 630 p,746 597 m,746 608 O,725 624 K,767 632 r,647 668 G,782 670 T,830 670 u,531 684 N,705 699 M,744 712 n,595 707 T,448 708 m,376 725 n,268 771 l,287 778 r,395 780 G,595 771 g,711 776 n'],
[620,150,'30 608 t,110 638 t,199 655 t,100 663 O,5 670 u,94 703 l,156 746 B,146 755 r,191 755 G,200 762 N,110 769 m,238 611 K,286 628 M,514 539 r,536 545 b,570 551 T,473 568 N,484 582 o,523 573 T,428 610 t,487 609 t,376 639 r,393 657 N,470 649 o,436 695 O,475 702 u,394 722 T,362 743 o,421 745 l'],
[345,400,'529 47 U,283 59 o,316 66 K,420 65 U,268 97 G,294 112 m,322 139 O,375 91 o,399 121 G,403 152 U,449 166 U,469 185 B,512 178 k,583 139 t,668 121 m,798 81 T,783 117 p,816 132 n,817 221 g,404 212 r,450 235 y,594 208 u,601 265 y,535 278 o,640 278 g,643 286 M,642 296 M,424 305 b,465 321 U,786 301 k,679 326 k,742 327 U,479 356 n,499 378 m,445 378 y,565 387 k,575 387 N,655 415 u,614 432 T,688 454 p,606 478 b,611 474 M,609 484 M,490 484 y,715 485 g,716 482 G,566 516 p,519 530 k,700 526 g,626 535 U,536 563 p,582 568 m,653 579 r,670 581 y,556 606 u,627 619 l,577 678 K,375 576 O'],
[620,400,'146 43 O,88 68 M,56 84 l,54 99 k,243 49 n,131 160 G,19 167 M,21 273 n,425 541 l,429 649 k']];
const dots=document.getElementById('dots');
tiles.forEach(([ox,oy,s])=>s.split(',').forEach(e=>{const [x,y,k]=e.split(' ');const c=document.createElementNS(NS,'circle');
 c.setAttribute('cx',ox+x/3+.2);c.setAttribute('cy',oy+y/3+.2);c.setAttribute('r',2.35);c.setAttribute('fill',C[k]);dots.append(c);}));
const n=document.getElementById('natl'),cs=n.cloneNode(true);cs.removeAttribute('id');cs.classList.add('casing');n.before(cs);
/* track each label out to its set width */
document.querySelectorAll('.fit[data-w]').forEach(e=>{const w=e.getBoundingClientRect().width,t=+e.dataset.w,c=e.textContent.length;
 const d=(t-w)/c;e.style.letterSpacing=d.toFixed(3)+'px';});
</script>
</body>
</html>
